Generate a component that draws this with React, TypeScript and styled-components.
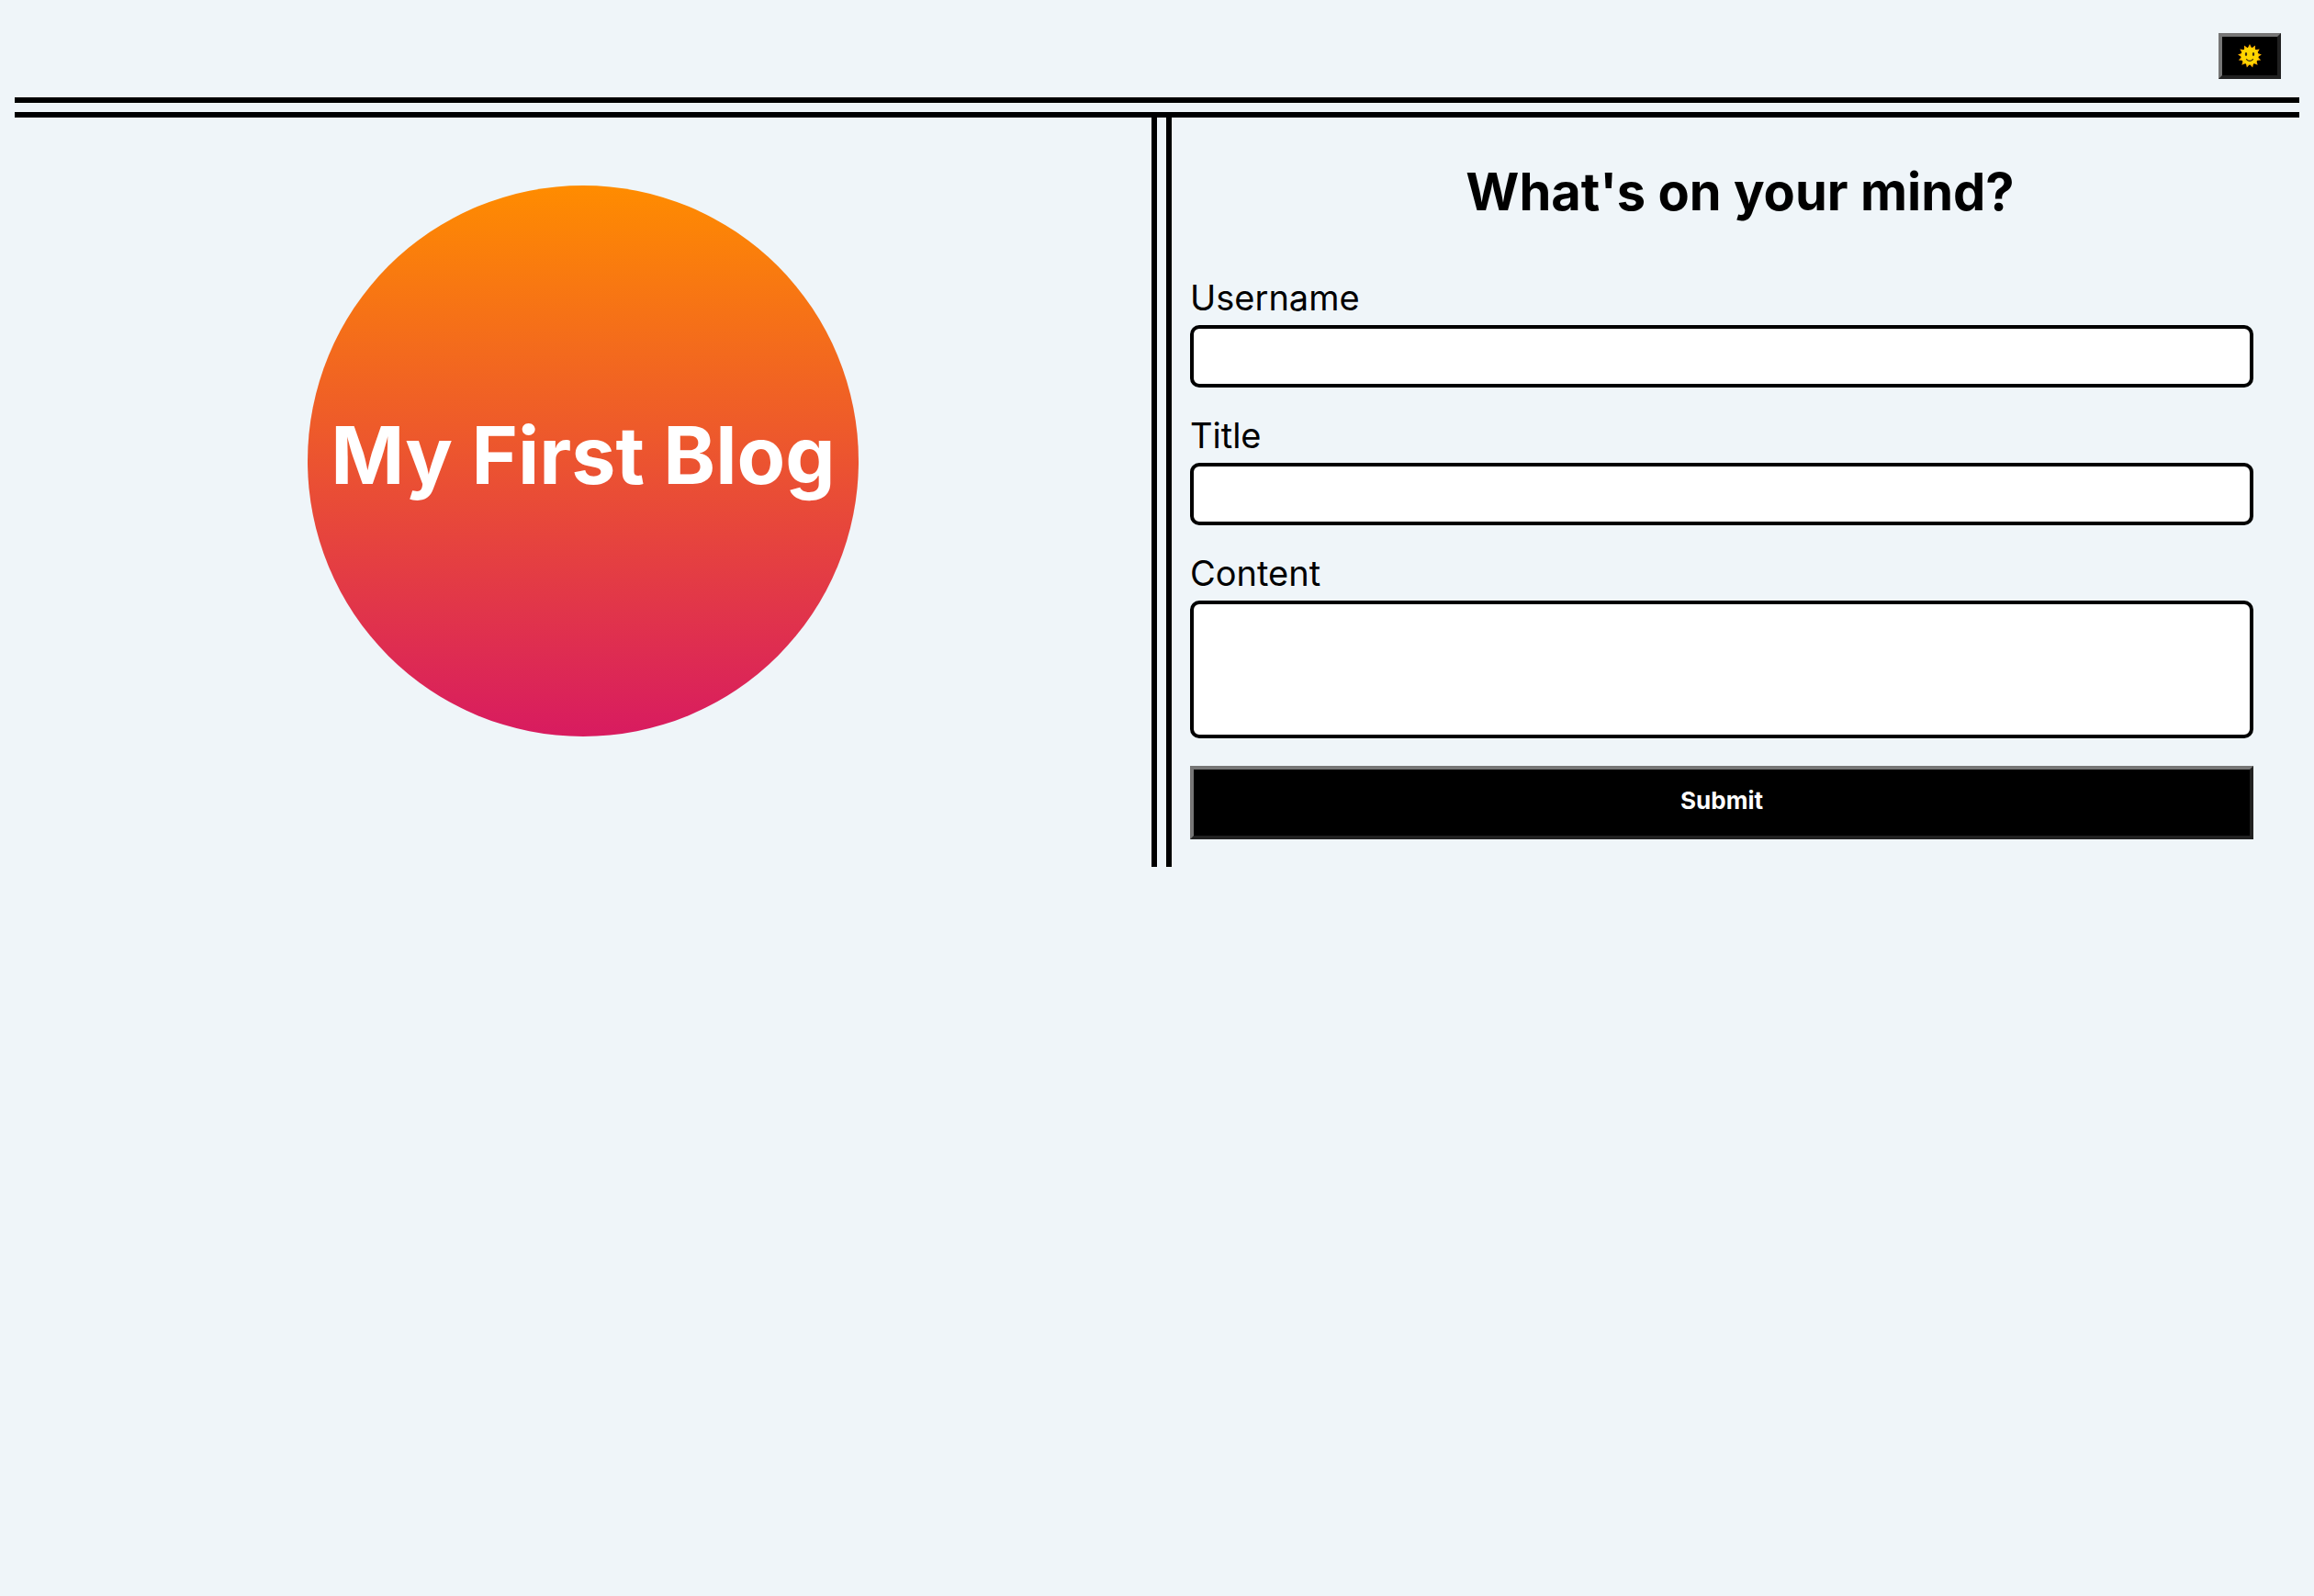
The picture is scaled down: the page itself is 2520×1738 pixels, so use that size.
import React, { useState } from "react";
import styled, { createGlobalStyle } from "styled-components";

const GlobalStyle = createGlobalStyle`
  * { box-sizing: border-box; }
  body {
    margin: 16px;
    background: #eff5f9;
    color: #000;
    font-family: Inter, "Liberation Sans", sans-serif;
  }
`;

const Header = styled.header`
  display: flex;
  justify-content: flex-end;
  padding: 20px;
`;

const HeaderRule = styled.div`
  height: 22px;
  border: solid #000;
  border-width: 6px 0;
`;

const ColumnRule = styled.div`
  flex: 0 0 22px;
  border: solid #000;
  border-width: 0 6px;
`;

const Button = styled.button`
  border: 4px solid;
  border-color: #767676 #212121 #212121 #767676;
  background: #000;
  color: #fff;
  font-family: inherit;
  font-weight: 700;
  cursor: pointer;
`;

const ThemeButton = styled(Button)`
  display: flex;
  align-items: center;
  justify-content: center;
  width: 68px;
  height: 50px;
  padding: 0;
`;

const SubmitButton = styled(Button)`
  height: 80px;
  padding: 0 0 6px;
  font-size: 26px;
`;

const Main = styled.main`
  display: flex;
`;

const Intro = styled.section`
  flex: 1;
  display: flex;
  justify-content: center;
  align-items: flex-start;
  padding: 74px 20px 0;
`;

const Circle = styled.div`
  display: flex;
  flex-shrink: 0;
  align-items: center;
  justify-content: center;
  width: 600px;
  height: 600px;
  padding-bottom: 12px;
  border-radius: 50%;
  background: linear-gradient(#ff8c00, #d81b60);
  color: #fff;
`;

const SiteTitle = styled.h1`
  margin: 0;
  font-size: 86px;
  line-height: 108px;
  white-space: nowrap;
`;

const Compose = styled.section`
  flex: 1;
  padding: 40px 10px 30px 20px;
`;

const Heading = styled.h2`
  margin: 0 0 48px;
  font-size: 56px;
  line-height: 82px;
  text-align: center;
`;

const Form = styled.form`
  display: flex;
  flex-direction: column;
  gap: 26px;
  margin-right: 40px;
`;

const Field = styled.div`
  display: flex;
  flex-direction: column;
  gap: 4px;
`;

const Label = styled.label`
  font-size: 38px;
  line-height: 52px;
`;

const Input = styled.input`
  height: 68px;
  padding: 0 16px;
  border: 4px solid #000;
  border-radius: 10px;
  background: #fff;
  font: inherit;
  font-size: 32px;
`;

const TextArea = styled(Input).attrs({ as: "textarea" })`
  height: 150px;
  padding: 12px 16px;
  resize: none;
`;

const Actions = styled.div`
  display: grid;
  padding-top: 4px;
`;

const rays = Array.from({ length: 26 }, (_, i) => {
  const angle = (i * Math.PI) / 13 - Math.PI / 2 + Math.PI / 13;
  const radius = i % 2 === 0 ? 9 : 13;
  return `${14 + radius * Math.cos(angle)},${14 + radius * Math.sin(angle)}`;
}).join(" ");

function SunIcon() {
  return (
    <svg width="28" height="28" viewBox="0 0 28 28" aria-hidden="true">
      <polygon points={rays} fill="#ffb300" />
      <circle cx="14" cy="14" r="9.6" fill="#ffd600" />
      <ellipse cx="10" cy="12" rx="1.2" ry="2" fill="#3b2a12" />
      <ellipse cx="18" cy="12" rx="1.2" ry="2" fill="#3b2a12" />
      <path d="M10.5 17.6q3.5 3.6 7 0" fill="none" stroke="#3b2a12" strokeWidth="1.3" strokeLinecap="round" />
    </svg>
  );
}

export default function App() {
  const [username, setUsername] = useState("");
  const [title, setTitle] = useState("");
  const [content, setContent] = useState("");

  return (
    <>
      <GlobalStyle />
      <Header>
        <ThemeButton type="button" aria-label="Toggle theme">
          <SunIcon />
        </ThemeButton>
      </Header>
      <HeaderRule />
      <Main>
        <Intro>
          <Circle>
            <SiteTitle>My First Blog</SiteTitle>
          </Circle>
        </Intro>
        <ColumnRule />
        <Compose>
          <Heading>What's on your mind?</Heading>
          <Form onSubmit={(event) => event.preventDefault()}>
            <Field>
              <Label htmlFor="username">Username</Label>
              <Input id="username" value={username} onChange={(e) => setUsername(e.target.value)} />
            </Field>
            <Field>
              <Label htmlFor="title">Title</Label>
              <Input id="title" value={title} onChange={(e) => setTitle(e.target.value)} />
            </Field>
            <Field>
              <Label htmlFor="content">Content</Label>
              <TextArea id="content" value={content} onChange={(e) => setContent(e.target.value)} />
            </Field>
            <Actions>
              <SubmitButton type="submit">Submit</SubmitButton>
            </Actions>
          </Form>
        </Compose>
      </Main>
    </>
  );
}
